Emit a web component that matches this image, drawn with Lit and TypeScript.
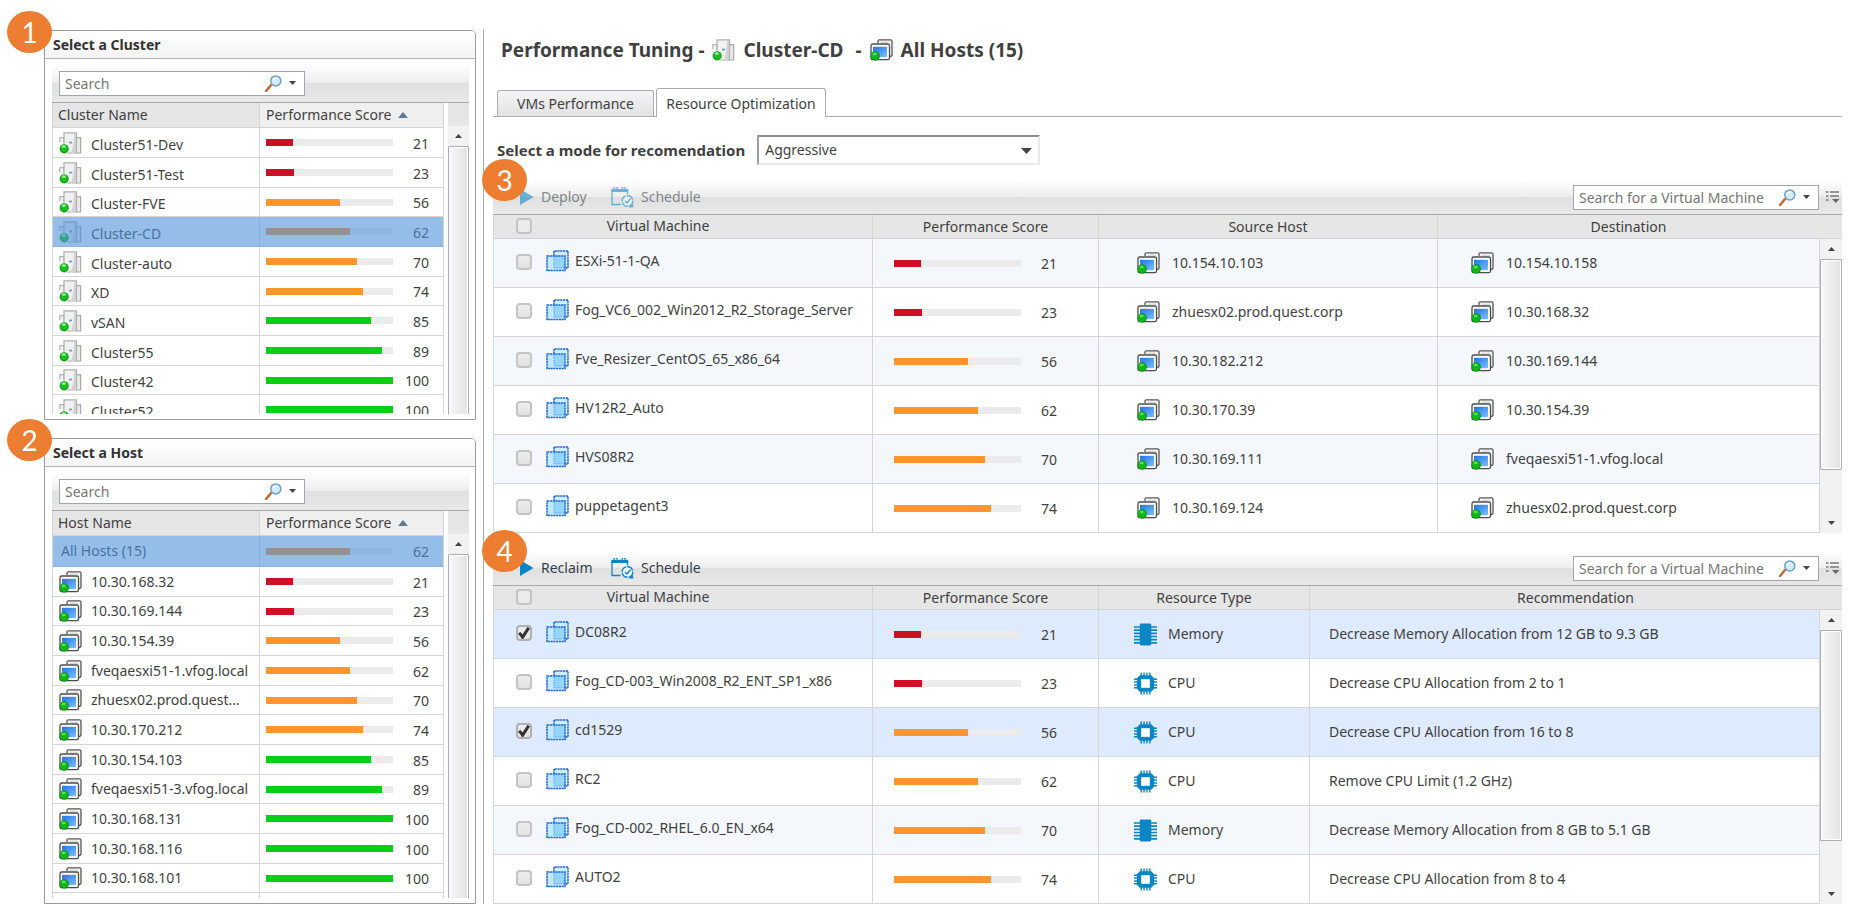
import { LitElement, html, css, nothing, TemplateResult } from "lit";
import { customElement, property } from "lit/decorators.js";
import { classMap } from "lit/directives/class-map.js";

type Level = "low" | "mid" | "high";
interface Score { value: number; fill: number; level: Level; }
interface Entry { name: string; score: Score; }
interface Move extends Entry { source: string; target: string; }
interface Saving extends Entry { kind: "Memory" | "CPU"; advice: string; picked?: boolean; }

const S21: Score = { value: 21, fill: 21, level: "low" };
const S23: Score = { value: 23, fill: 22, level: "low" };
const S56: Score = { value: 56, fill: 58, level: "mid" };
const S62: Score = { value: 62, fill: 66, level: "mid" };
const S70: Score = { value: 70, fill: 72, level: "mid" };
const S74: Score = { value: 74, fill: 76, level: "mid" };
const S85: Score = { value: 85, fill: 83, level: "high" };
const S89: Score = { value: 89, fill: 91, level: "high" };
const S100: Score = { value: 100, fill: 100, level: "high" };

const clusters: Entry[] = [
  { name: "Cluster51-Dev", score: S21 },
  { name: "Cluster51-Test", score: S23 },
  { name: "Cluster-FVE", score: S56 },
  { name: "Cluster-CD", score: S62 },
  { name: "Cluster-auto", score: S70 },
  { name: "XD", score: S74 },
  { name: "vSAN", score: S85 },
  { name: "Cluster55", score: S89 },
  { name: "Cluster42", score: S100 },
  { name: "Cluster52", score: S100 },
];

const hosts: Entry[] = [
  { name: "All Hosts (15)", score: S62 },
  { name: "10.30.168.32", score: S21 },
  { name: "10.30.169.144", score: S23 },
  { name: "10.30.154.39", score: S56 },
  { name: "fveqaesxi51-1.vfog.local", score: S62 },
  { name: "zhuesx02.prod.quest...", score: S70 },
  { name: "10.30.170.212", score: S74 },
  { name: "10.30.154.103", score: S85 },
  { name: "fveqaesxi51-3.vfog.local", score: S89 },
  { name: "10.30.168.131", score: S100 },
  { name: "10.30.168.116", score: S100 },
  { name: "10.30.168.101", score: S100 },
];

const moves: Move[] = [
  { name: "ESXi-51-1-QA", score: S21, source: "10.154.10.103", target: "10.154.10.158" },
  { name: "Fog_VC6_002_Win2012_R2_Storage_Server", score: S23, source: "zhuesx02.prod.quest.corp", target: "10.30.168.32" },
  { name: "Fve_Resizer_CentOS_65_x86_64", score: S56, source: "10.30.182.212", target: "10.30.169.144" },
  { name: "HV12R2_Auto", score: S62, source: "10.30.170.39", target: "10.30.154.39" },
  { name: "HVS08R2", score: S70, source: "10.30.169.111", target: "fveqaesxi51-1.vfog.local" },
  { name: "puppetagent3", score: S74, source: "10.30.169.124", target: "zhuesx02.prod.quest.corp" },
];

const savings: Saving[] = [
  { name: "DC08R2", score: S21, kind: "Memory", advice: "Decrease Memory Allocation from 12 GB to 9.3 GB", picked: true },
  { name: "Fog_CD-003_Win2008_R2_ENT_SP1_x86", score: S23, kind: "CPU", advice: "Decrease CPU Allocation from 2 to 1" },
  { name: "cd1529", score: S56, kind: "CPU", advice: "Decrease CPU Allocation from 16 to 8", picked: true },
  { name: "RC2", score: S62, kind: "CPU", advice: "Remove CPU Limit (1.2 GHz)" },
  { name: "Fog_CD-002_RHEL_6.0_EN_x64", score: S70, kind: "Memory", advice: "Decrease Memory Allocation from 8 GB to 5.1 GB" },
  { name: "AUTO2", score: S74, kind: "CPU", advice: "Decrease CPU Allocation from 8 to 4" },
];

const hostIcon = html`<svg class="icon" width="23" height="22" viewBox="0 0 23 22" aria-hidden="true">
  <defs><linearGradient id="scr" x1="0" y1="0" x2="1" y2="1">
    <stop offset="0" stop-color="#1f74e8"></stop><stop offset="1" stop-color="#7cc0ff"></stop>
  </linearGradient></defs>
  <path d="M8 4V2.200Q8 .8 9.400 .8H20.600Q22 .8 22 2.200V15.800Q22 17.600 19.500 17.600" fill="#fafafa" stroke="#555" stroke-width="1.300"></path>
  <path d="M10.500 3.200H19.500" stroke="#ccc" stroke-width="1"></path>
  <rect x="1" y="5" width="18.500" height="15.700" rx="1.800" fill="#fff" stroke="#4c4c4c" stroke-width="1.300"></rect>
  <rect x="3" y="7.800" width="14" height="10.400" fill="url(#scr)"></rect>
  <circle cx="5.200" cy="17" r="4.700" fill="#0b8f10"></circle>
  <circle cx="5" cy="16.800" r="3.900" fill="#12b81a"></circle>
  <ellipse cx="4.600" cy="15" rx="2" ry="1.200" fill="#5edc60"></ellipse>
</svg>`;

const clusterIcon = html`<svg class="icon" width="23" height="22" viewBox="0 0 23 22" aria-hidden="true">
  <path d="M.8 10V5.600H5V20H2" fill="#f4f4f4" stroke="#b4b4b4" stroke-width="1.200"></path>
  <path d="M17 5.600H21.600V21H17Z" fill="#e9e9e9" stroke="#aaa" stroke-width="1.200"></path>
  <path d="M5 .8H17.500V21H8L5 15Z" fill="#f1f1f1" stroke="#b0b0b0" stroke-width="1.200"></path>
  <path d="M15 2H17V20.500H12Q15 14 15 2Z" fill="#d2d2d2"></path>
  <path d="M10 10.500H13" stroke="#6d9fdc" stroke-width="1.800"></path>
  <circle cx="5.200" cy="16.800" r="5.200" fill="#fff"></circle>
  <circle cx="5.200" cy="16.800" r="4.600" fill="#0c9612"></circle>
  <circle cx="5.200" cy="16.600" r="3.800" fill="#15bf1c"></circle>
  <ellipse cx="4.800" cy="14.600" rx="2.200" ry="1.300" fill="#9bea9b"></ellipse>
</svg>`;

const vmIcon = html`<svg class="icon" width="23" height="22" viewBox="0 0 23 22" aria-hidden="true">
  <rect x="8" y="1" width="14" height="17" fill="#cdeeff"></rect>
  <rect x="1" y="6" width="18" height="14.500" fill="#c0e9ff"></rect>
  <rect x="8" y="6" width="11" height="12" fill="#93d5ff"></rect>
  <path d="M8 7V18H19" fill="none" stroke="#5f9fe6" stroke-width="1" stroke-dasharray="1.500 1"></path>
  <path d="M8 6V1H22V18H19" fill="none" stroke="#2266d2" stroke-width="1.500" stroke-dasharray="2.200 .6"></path>
  <rect x="1" y="6" width="18" height="14.500" fill="none" stroke="#2266d2" stroke-width="1.500" stroke-dasharray="2.200 .6"></rect>
</svg>`;

const memoryIcon = html`<svg class="icon" width="23" height="23" viewBox="0 0 24 23" aria-hidden="true">
  <rect x="6" y="0" width="12" height="23" rx="1.500" fill="#0b86c5"></rect>
  <path d="M0 3.700H24M0 7H24M0 10.300H24M0 13.600H24M0 16.900H24M0 20.200H24" stroke="#0b86c5" stroke-width="1.700"></path>
</svg>`;

const cpuIcon = html`<svg class="icon" width="23" height="23" viewBox="0 0 24 23" aria-hidden="true">
  <path d="M7.500 0V23M10.500 0V23M13.500 0V23M16.500 0V23M0 7H24M0 10H24M0 13H24M0 16H24" stroke="#0b86c5" stroke-width="1.500"></path>
  <path d="M6 3H18L21 6V17L18 20H6L3 17V6Z" fill="#0b86c5"></path>
  <rect x="7.500" y="7" width="9" height="9" fill="#fff"></rect>
</svg>`;

const playIcon = html`<svg width="14" height="16" viewBox="0 0 14 16" aria-hidden="true"><path d="M0 0L13.500 8L0 16Z" fill="#0b86c5"></path></svg>`;

const scheduleIcon = html`<svg width="23" height="21" viewBox="0 0 23 21" aria-hidden="true">
  <path d="M1 3V17.500H9.500M16.500 7.500V3" fill="none" stroke="#0b86c5" stroke-width="1.300"></path>
  <rect x=".3" y="1.800" width="16.900" height="3.200" fill="#0b86c5"></rect>
  <path d="M2.500 .8H7M10.500 .8H15" stroke="#0b86c5" stroke-width="1.600" stroke-dasharray="1.600 1"></path>
  <circle cx="16.500" cy="14" r="5.300" fill="#eef6fb" stroke="#0b86c5" stroke-width="1.400" stroke-dasharray="7 1"></circle>
  <path d="M14 14L16 16L19.400 11.800" fill="none" stroke="#0b86c5" stroke-width="1.400"></path>
  <path d="M18 20.800L22.500 20.300L21.500 16.500Z" fill="#0b86c5"></path>
</svg>`;

const lensIcon = html`<svg width="17" height="17" viewBox="0 0 17 17" aria-hidden="true">
  <path d="M1 16L6 10" stroke="#c4682a" stroke-width="2.400" stroke-linecap="round"></path>
  <circle cx="10.800" cy="5.900" r="5" fill="#d3ecfb" stroke="#6f9fd0" stroke-width="1.500"></circle>
  <path d="M8 5.500Q8.500 3.200 11 3" fill="none" stroke="#fff" stroke-width="1.300"></path>
</svg>`;

const optionsIcon = html`<svg width="14" height="14" viewBox="0 0 14 14" aria-hidden="true">
  <path d="M0 2H2.500M0 6H2.500M0 10H2.500M4 2H13M4 6H13" stroke="#777" stroke-width="1.500"></path>
  <path d="M6 9H13.500L9.800 13Z" fill="#666"></path>
</svg>`;

const caret = (w: number, h: number, up = false, fill = "#444") => html`<svg width=${w} height=${h} viewBox="0 0 10 6" preserveAspectRatio="none" aria-hidden="true">
  <path d=${up ? "M0 6H10L5 0Z" : "M0 0H10L5 6Z"} fill=${fill}></path></svg>`;

const base = css`
  :host { display: block; font-family: "Noto Sans", "Open Sans", sans-serif; font-size: 14px; line-height: 18px; color: #3f3f3f; }
  * { box-sizing: border-box; }
  svg { display: block; flex: none; }
  button { font: inherit; color: inherit; background: none; border: 0; padding: 0; margin: 0; }
  table { border-collapse: separate; border-spacing: 0; table-layout: fixed; width: 100%; }
  th { font-weight: 400; padding: 0; white-space: nowrap; }
  td { padding: 0; white-space: nowrap; overflow: hidden; }
  .toolbar {
    display: flex; align-items: center; border-bottom: 1px solid #a9a9a9;
    background: linear-gradient(#fff 0%, #ededed 49%, #e0e0e0 51%, #e8e8e8 100%);
  }
  .with-icon { display: flex; align-items: center; }
`;

@customElement("score-meter")
export class ScoreMeter extends LitElement {
  static styles = css`
    :host { display: flex; align-items: center; }
    .track { flex: none; width: 127px; height: 7px; background: #ebebeb; }
    .fill { height: 100%; }
    .low { background: #cf0f25; }
    .mid { background: #ff952d; }
    .high { background: #06d016; }
    .value { width: 36px; padding-top: 2px; text-align: right; }
  `;
  @property({ attribute: false }) score: Score = S100;
  render() {
    const { value, fill, level } = this.score;
    return html`<div class="track"><div class="fill ${level}" style="width:${fill}%"></div></div><span class="value">${value}</span>`;
  }
}

@customElement("search-field")
export class SearchField extends LitElement {
  static styles = [base, css`
    :host { width: 246px; }
    .box { display: flex; align-items: center; height: 25px; background: #fff; border: 1px solid #a3a5ad; padding: 0 8px 0 0; }
    input { flex: 1; min-width: 0; height: 100%; border: 0; outline: 0; background: none; padding: 0 0 0 5px; font: inherit; color: #333; }
    input::placeholder { color: #767676; opacity: 1; }
    .tools { display: flex; align-items: center; gap: 7px; }
  `];
  @property() label = "Search";
  render() {
    return html`<div class="box">
      <input type="text" placeholder=${this.label} aria-label=${this.label} />
      <button class="tools" aria-label="Search options">${lensIcon}${caret(7, 4)}</button>
    </div>`;
  }
}

@customElement("scroll-rail")
export class ScrollRail extends LitElement {
  static styles = [base, css`
    :host { display: flex; flex-direction: column; background: #f2f2f2; }
    button { display: flex; align-items: center; justify-content: center; height: 20px; flex: none; }
    .track { flex: 1; display: flex; flex-direction: column; }
    .thumb { border: 1px solid #a9abb5; border-radius: 1px; background: linear-gradient(90deg, #f8f8f8, #e3e3e3); box-shadow: inset 0 0 0 1px #fff; }
  `];
  @property({ type: Number }) share = 100;
  render() {
    return html`<button aria-label="Scroll up">${caret(7, 4, true)}</button>
      <div class="track"><div class="thumb" style="height:${this.share}%"></div></div>
      <button aria-label="Scroll down">${caret(7, 4)}</button>`;
  }
}

@customElement("picker-panel")
export class PickerPanel extends LitElement {
  static styles = [base, css`
    .panel { border: 1px solid #979aa2; border-radius: 5px 5px 0 0; background: #fff; }
    h2 {
      margin: 0; height: 28px; padding: 0 8px; line-height: 28px; font-size: 14px; font-weight: 700; color: #333;
      background: linear-gradient(#fff, #f3f3f3); border-bottom: 1px solid #b4b4b4; border-radius: 4px 4px 0 0;
    }
    .body { padding: 5px 6px 5px 7px; }
    .toolbar { height: 39px; padding: 0 7px; }
    .list { display: grid; grid-template-columns: minmax(0, 1fr) 21px; column-gap: 4px; overflow: hidden; }
    .short { height: 311px; }
    .tall { height: 387px; }
    .rows { border-left: 1px solid #d6d6d6; border-right: 1px solid #d6d6d6; }
    .name-col { width: 207px; }
    th { height: 25px; text-align: left; padding-left: 6px; background: #efefef; border-bottom: 1px solid #d3d3d3; }
    th.first { background: #e5e5e5; border-right: 1px solid #d6d6d6; padding-left: 5px; }
    th .with-icon { gap: 7px; }
    td { height: 30px; border-bottom: 1px solid #d6d6d6; padding-left: 6px; }
    tr:nth-child(3n) td { height: 29px; }
    td.first { border-right: 1px solid #d6d6d6; padding-left: 6px; }
    td .with-icon { gap: 9px; }
    .short td .with-icon span { padding-top: 4px; }
    tr.spacer td { border-bottom: 0; }
    tr.plain td { height: 31px; }
    tr.plain td.first { padding-left: 8px; }
    tr.selected td { position: relative; border-color: #8bb1da; }
    tr.selected td::after { content: ""; position: absolute; inset: 0; background: rgba(77, 145, 217, .6); }
    .rail { display: flex; flex-direction: column; }
    .rail-head { height: 23px; background: #e6e6e6; flex: none; }
    .rail scroll-rail { flex: 1; margin-bottom: 7px; }
    .tall .rail scroll-rail { margin-bottom: 0; }
  `];
  @property() heading = "";
  @property() column = "";
  @property() selected = "";
  @property() size: "short" | "tall" = "short";
  @property({ attribute: false }) entries: Entry[] = [];
  @property({ attribute: false }) icon: TemplateResult = hostIcon;
  render() {
    return html`<section class="panel">
      <h2>${this.heading}</h2>
      <div class="body">
        <div class="toolbar"><search-field></search-field></div>
        <div class="list ${this.size}">
          <div class="rows"><table>
            <colgroup><col class="name-col" /><col /></colgroup>
            <thead><tr>
              <th class="first" scope="col">${this.column}</th>
              <th scope="col" aria-sort="ascending"><div class="with-icon">Performance Score ${caret(10, 6, true, "#5f7896")}</div></th>
            </tr></thead>
            <tbody>
              ${this.entries.map((e) => {
                const plain = e.name.startsWith("All ");
                return html`<tr class=${classMap({ selected: e.name === this.selected, plain })}>
                  <td class="first"><div class="with-icon">${plain ? nothing : this.icon}<span>${e.name}</span></div></td>
                  <td><score-meter .score=${e.score}></score-meter></td>
                </tr>`;
              })}
              <tr class="spacer"><td class="first"></td><td></td></tr>
            </tbody>
          </table></div>
          <div class="rail"><div class="rail-head"></div><scroll-rail share=${100}></scroll-rail></div>
        </div>
      </div>
    </section>`;
  }
}

@customElement("vm-grid")
export class VmGrid extends LitElement {
  static styles = [base, css`
    .toolbar { height: 35px; padding: 0 2px 0 27px; }
    .action { display: flex; align-items: center; gap: 7px; min-width: 73px; margin-right: 18px; color: #333f4d; }
    .action:disabled { opacity: .58; }
    .spread { flex: 1; }
    .options { margin: 0 0 0 7px; }
    .content { display: grid; grid-template-columns: minmax(0, 1fr) 22px; }
    table { border-left: 1px solid #d6d6d6; }
    .vm { width: 379px; }
    .score { width: 226px; }
    .source { width: 339px; }
    .kind { width: 211px; }
    th { height: 24px; background: #e6e6e6; border-bottom: 1px solid #d3d3d3; border-right: 1px solid #d3d3d3; text-align: center; }
    th:last-child { border-right-color: #e6e6e6; }
    th.wide { padding-left: 22px; }
    .pick { display: grid; grid-template-columns: 52px minmax(0, 1fr); align-items: center; }
    .pick .title { padding-right: 102px; }
    input[type="checkbox"] {
      appearance: none; display: block; margin: 0 0 0 22px; width: 16px; height: 16px;
      border: 2px solid #c4c4c4; border-radius: 4px; background: linear-gradient(#ededed, #e2e2e2);
    }
    th input[type="checkbox"] { background: #ebebeb; }
    input[type="checkbox"]:checked { border-color: #b0b0b0; }
    input[type="checkbox"]:checked::after {
      content: ""; display: block; width: 12px; height: 12px; background: #333;
      clip-path: polygon(0 55%, 20% 42%, 38% 62%, 78% 0, 100% 12%, 44% 100%, 34% 100%);
    }
    td { height: 49px; border-bottom: 1px solid #d6d6d6; border-right: 1px solid #d6d6d6; }
    tr.tinted td { background: #f4f8fd; }
    tr.picked td { background: #deebfe; border-bottom-color: #d2dcec; }
    .pick { padding-bottom: 2px; }
    .pick .with-icon { gap: 6px; padding-bottom: 2px; }
    td.score-cell { padding-left: 21px; }
    td.host { padding-left: 38px; }
    td.host.last { padding-left: 33px; }
    td.host .with-icon { gap: 12px; }
    td.type { padding-left: 35px; }
    td.type .with-icon { gap: 11px; }
    td.advice { padding-left: 19px; }
    .rail { display: flex; flex-direction: column; }
    .rail-head { height: 24px; background: #e6e6e6; border-bottom: 1px solid #d3d3d3; }
    .rail scroll-rail { flex: 1; }
  `];
  @property() mode: "deploy" | "reclaim" = "deploy";

  private vmCells(e: Entry, picked: boolean) {
    return html`<td><div class="pick">
        <input type="checkbox" aria-label="Select ${e.name}" .checked=${picked} />
        <div class="with-icon">${vmIcon}<span>${e.name}</span></div>
      </div></td>
      <td class="score-cell"><score-meter .score=${e.score}></score-meter></td>`;
  }
  private host(name: string, last = false) {
    return html`<td class=${classMap({ host: true, last })}><div class="with-icon">${hostIcon}<span>${name}</span></div></td>`;
  }
  render() {
    const deploy = this.mode === "deploy";
    return html`<section>
      <div class="toolbar">
        <button class="action" ?disabled=${deploy}>${playIcon}${deploy ? "Deploy" : "Reclaim"}</button>
        <button class="action" ?disabled=${deploy}>${scheduleIcon}Schedule</button>
        <div class="spread"></div>
        <search-field label="Search for a Virtual Machine"></search-field>
        <button class="options" aria-label="Column options">${optionsIcon}</button>
      </div>
      <div class="content">
        <table>
          <colgroup><col class="vm" /><col class="score" /><col class=${deploy ? "source" : "kind"} /><col /></colgroup>
          <thead><tr>
            <th scope="col"><div class="pick"><input type="checkbox" aria-label="Select all virtual machines" /><span class="title">Virtual Machine</span></div></th>
            <th scope="col">Performance Score</th>
            <th scope="col">${deploy ? "Source Host" : "Resource Type"}</th>
            <th scope="col" class=${deploy ? "" : "wide"}>${deploy ? "Destination" : "Recommendation"}</th>
          </tr></thead>
          <tbody>
            ${deploy
              ? moves.map((m, i) => html`<tr class=${classMap({ tinted: i % 2 === 0 })}>
                  ${this.vmCells(m, false)}${this.host(m.source)}${this.host(m.target, true)}
                </tr>`)
              : savings.map((s, i) => html`<tr class=${classMap({ tinted: i % 2 === 0, picked: !!s.picked })}>
                  ${this.vmCells(s, !!s.picked)}
                  <td class="type"><div class="with-icon">${s.kind === "CPU" ? cpuIcon : memoryIcon}<span>${s.kind}</span></div></td>
                  <td class="advice">${s.advice}</td>
                </tr>`)}
          </tbody>
        </table>
        <div class="rail"><div class="rail-head"></div><scroll-rail share=${83}></scroll-rail></div>
      </div>
    </section>`;
  }
}

@customElement("app-root")
export class AppRoot extends LitElement {
  static styles = [base, css`
    .page { display: flex; align-items: stretch; padding: 29px 7px 13px 44px; background: #fff; }
    aside { width: 432px; flex: none; margin: 1px 7px 0 0; display: flex; flex-direction: column; gap: 18px; }
    main { flex: 1; min-width: 0; border-left: 1px solid #a9a9ae; padding-left: 9px; }
    .step { position: relative; }
    .badge {
      position: absolute; z-index: 1; width: 45px; height: 42px; border-radius: 50%; background: #ed7d31; color: #fff;
      font-family: Lato, sans-serif; font-size: 28px; line-height: 42px; text-align: center;
    }
    .step .badge { left: -37px; top: -19px; }
    main .step .badge { left: -11px; top: -21px; }
    h1 { margin: 0; height: 42px; display: flex; align-items: center; padding-left: 8px; font-size: 19px; line-height: 24px; font-weight: 700; color: #404040; }
    h1 .icon { margin: 0 8px; }
    .dash { margin-left: 12px; }
    .tabs { display: flex; align-items: flex-end; gap: 2px; height: 29px; margin-top: 17px; padding-left: 4px; border-bottom: 1px solid #a9acb5; }
    .tab { height: 26px; width: 157px; border: 1px solid #a9acb5; border-bottom: 0; border-radius: 3px 3px 0 0; background: linear-gradient(#f4f4f4, #e3e3e3); }
    .tab.active { height: 29px; width: 170px; margin-bottom: -1px; padding-top: 2px; background: #fff; }
    .mode { display: flex; align-items: center; gap: 12px; height: 30px; margin: 18px 0 15px; padding-left: 4px; font-size: 15px; font-weight: 700; }
    .choice { position: relative; width: 283px; font-size: 14px; }
    select {
      appearance: none; width: 100%; height: 30px; padding: 0 6px; font: inherit; font-weight: 400; color: inherit; background: #fff;
      border: 2px solid #e9e9e9; border-top-color: #8e8e8e; border-left-color: #9c9c9c; border-radius: 0;
    }
    .choice svg { position: absolute; right: 8px; top: 13px; pointer-events: none; }
    .grids { display: flex; flex-direction: column; gap: 18px; }
  `];
  render() {
    return html`<div class="page">
      <aside>
        <div class="step"><span class="badge">1</span>
          <picker-panel heading="Select a Cluster" column="Cluster Name" selected="Cluster-CD" size="short" .entries=${clusters} .icon=${clusterIcon}></picker-panel>
        </div>
        <div class="step"><span class="badge">2</span>
          <picker-panel heading="Select a Host" column="Host Name" selected="All Hosts (15)" size="tall" .entries=${hosts} .icon=${hostIcon}></picker-panel>
        </div>
      </aside>
      <main>
        <h1>Performance Tuning - ${clusterIcon}Cluster-CD<span class="dash">-</span>${hostIcon}All Hosts (15)</h1>
        <div class="tabs" role="tablist">
          <button class="tab" role="tab" aria-selected="false">VMs Performance</button>
          <button class="tab active" role="tab" aria-selected="true">Resource Optimization</button>
        </div>
        <div class="mode">
          <label for="mode">Select a mode for recomendation</label>
          <div class="choice">
            <select id="mode"><option selected>Aggressive</option></select>
            ${caret(11, 6)}
          </div>
        </div>
        <div class="grids">
          <div class="step"><span class="badge">3</span><vm-grid mode="deploy"></vm-grid></div>
          <div class="step"><span class="badge">4</span><vm-grid mode="reclaim"></vm-grid></div>
        </div>
      </main>
    </div>`;
  }
}
